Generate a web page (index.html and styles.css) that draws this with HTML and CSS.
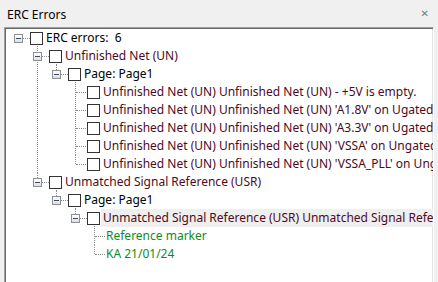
FILE: index.html
```html
<!DOCTYPE html>
<html lang="en">
<head>
    <meta charset="UTF-8">
    <title>ERC Errors</title>
    <link rel="stylesheet" href="styles.css">
</head>
<body>

<div class="titlebar">
    <span class="title">ERC Errors</span>
    <span class="close">&#x2715;</span>
</div>

<div class="panel">
    <ul class="tree">
        <li>
            <div class="row"><span class="exp"></span><span class="chk"></span><span class="label">ERC errors:  6</span></div>
            <ul>
                <li>
                    <div class="row"><span class="exp"></span><span class="chk"></span><span class="label err">Unfinished Net (UN)</span></div>
                    <ul>
                        <li class="last">
                            <div class="row"><span class="exp"></span><span class="chk"></span><span class="label">Page: Page1</span></div>
                            <ul>
                                <li><div class="row"><span class="slot"></span><span class="chk"></span><span class="label err">Unfinished Net (UN) Unfinished Net (UN) - +5V is empty.</span></div></li>
                                <li><div class="row"><span class="slot"></span><span class="chk"></span><span class="label err">Unfinished Net (UN) Unfinished Net (UN) 'A1.8V' on Ugated Pin of Page1</span></div></li>
                                <li><div class="row"><span class="slot"></span><span class="chk"></span><span class="label err">Unfinished Net (UN) Unfinished Net (UN) 'A3.3V' on Ugated Pin of Page1</span></div></li>
                                <li><div class="row"><span class="slot"></span><span class="chk"></span><span class="label err">Unfinished Net (UN) Unfinished Net (UN) 'VSSA' on Ungated Pin of Page1</span></div></li>
                                <li class="last"><div class="row"><span class="slot"></span><span class="chk"></span><span class="label err">Unfinished Net (UN) Unfinished Net (UN) 'VSSA_PLL' on Ungated Pin of Page1</span></div></li>
                            </ul>
                        </li>
                    </ul>
                </li>
                <li class="last">
                    <div class="row"><span class="exp"></span><span class="chk"></span><span class="label err">Unmatched Signal Reference (USR)</span></div>
                    <ul>
                        <li class="last">
                            <div class="row"><span class="exp"></span><span class="chk"></span><span class="label">Page: Page1</span></div>
                            <ul>
                                <li class="last">
                                    <div class="row"><span class="exp"></span><span class="chk"></span><span class="label err selected">Unmatched Signal Reference (USR) Unmatched Signal Reference (USR) on Page1</span></div>
                                    <ul>
                                        <li><div class="row"><span class="slot"></span><span class="label note">Reference marker</span></div></li>
                                        <li class="last"><div class="row"><span class="slot"></span><span class="label note">KA 21/01/24</span></div></li>
                                    </ul>
                                </li>
                            </ul>
                        </li>
                    </ul>
                </li>
            </ul>
        </li>
    </ul>
</div>

</body>
</html>
```

FILE: styles.css
```css
html, body {
    margin: 0;
    height: 100%;
    overflow: hidden;
}
body {
    background: #f0f0f0;
    font-family: "Noto Sans", "Open Sans", sans-serif;
    font-size: 12px;
    color: #000;
}
.titlebar {
    height: 27px;
    display: flex;
    align-items: center;
    justify-content: space-between;
    padding: 0 9px 0 7px;
}
.title {
    margin-top: 1px;
}
.close {
    color: #7a7a7a;
    font-family: "DejaVu Sans", sans-serif;
    font-size: 10px;
}
.panel {
    margin-left: 4px;
    width: 430px;
    height: 270px;
    box-sizing: border-box;
    background: #fff;
    border: 1px solid;
    border-color: #a0a0a0 #fff #fff #a0a0a0;
    box-shadow: inset 1px 1px #696969, inset -1px -1px #e3e3e3;
    padding: 1px 0 0 1px;
    overflow: hidden;
}
.tree, .tree ul {
    list-style: none;
    margin: 0;
    padding: 0;
}
.tree {
    padding-left: 4px;
}
.tree ul {
    padding-left: 19px;
}
.tree li {
    position: relative;
}
/* vertical dotted connector */
.tree ul li::before {
    content: "";
    position: absolute;
    left: 8px;
    top: -1px;
    bottom: 0;
    border-left: 1px dotted #8c8c8c;
}
.tree ul li.last::before {
    bottom: auto;
    height: 10px;
}
.row {
    display: flex;
    align-items: center;
    height: 18px;
    white-space: nowrap;
}
.exp, .slot {
    position: relative;
    z-index: 1;
    flex: none;
}
.exp {
    width: 9px;
    height: 9px;
    box-sizing: border-box;
    margin: 0 7px 0 4px;
    border: 1px solid #8e8f8f;
    background: linear-gradient(#fff, #dedede);
}
.exp::before {
    content: "";
    position: absolute;
    left: 1px;
    top: 3px;
    width: 5px;
    height: 1px;
    background: #3b4a6b;
}
/* horizontal dotted connector */
.exp::after {
    content: "";
    position: absolute;
    left: 8px;
    top: 3px;
    width: 7px;
    border-top: 1px dotted #8c8c8c;
}
.slot {
    width: 20px;
    height: 18px;
}
.slot::after {
    content: "";
    position: absolute;
    left: 9px;
    top: 9px;
    width: 10px;
    border-top: 1px dotted #8c8c8c;
}
.chk {
    flex: none;
    width: 13px;
    height: 13px;
    box-sizing: border-box;
    border: 1px solid #333;
    background: #fff;
}
.label {
    margin-left: 1px;
    padding: 0 2px;
    line-height: 18px;
    white-space: pre;
}
.slot + .label {
    margin-left: -2px;
}
.err {
    color: #4e0a22;
}
.note {
    color: #118a1e;
}
.selected {
    background: #efefef;
}
```
